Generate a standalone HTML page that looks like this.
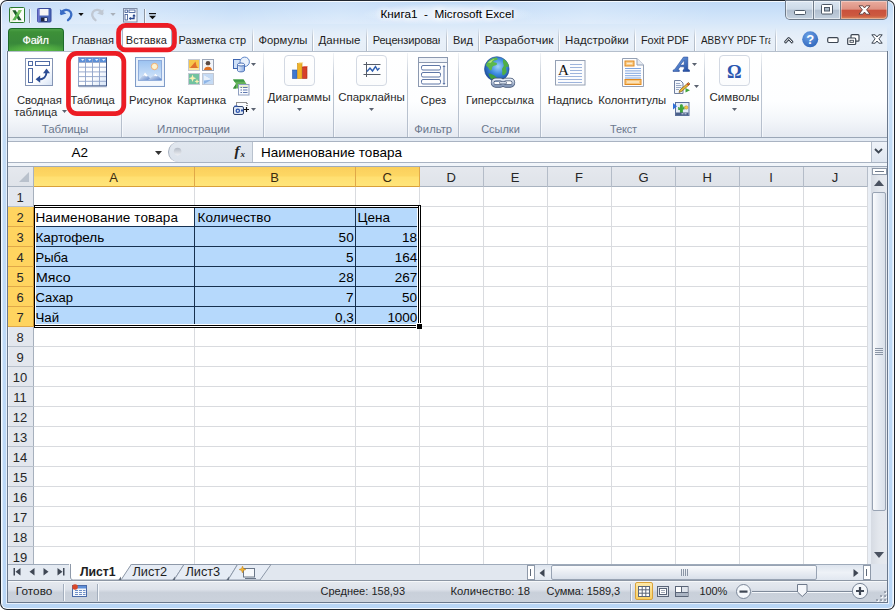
<!DOCTYPE html>
<html lang="ru"><head><meta charset="utf-8"><title>Книга1 - Microsoft Excel</title>
<style>
html,body{margin:0;padding:0;background:#fff;}
body{width:895px;height:610px;overflow:hidden;font-family:"Liberation Sans",sans-serif;}
#win{position:relative;width:895px;height:610px;overflow:hidden;}
#win div,#win svg,#win span.t{position:absolute;box-sizing:border-box;}
#win svg{overflow:visible;}
span.t{white-space:nowrap;line-height:16px;height:16px;color:#1e1e1e;font-size:12px;}
.cal{font-family:"Liberation Sans",sans-serif;}

</style></head>
<body>
<div id="win">
<div style="left:0px;top:0px;width:895px;height:610px;border-radius:7px;background:#20262e;"></div>
<div style="left:1px;top:1px;width:893px;height:608px;border-radius:6px;background:#f4f9fe;"></div>
<div style="left:2px;top:2px;width:891px;height:606px;border-radius:5px;background:linear-gradient(180deg,#c0daf7 0px,#cde2f9 12px,#dae9fa 24px,#d0e3f8 60px,#c3dcf6 140px,#b9d6f6 606px);"></div>
<div style="left:2px;top:2px;width:891px;height:24px;border-radius:5px 5px 0 0;background:linear-gradient(100deg,rgba(255,255,255,0) 0%,rgba(255,255,255,.25) 12%,rgba(255,255,255,0) 26%,rgba(255,255,255,.18) 38%,rgba(255,255,255,0) 52%,rgba(255,255,255,.2) 66%,rgba(255,255,255,0) 80%);"></div>
<div style="left:2px;top:30px;width:1px;height:574px;background:#dcebfb;"></div>
<div style="left:892px;top:30px;width:1px;height:574px;background:#dcebfb;"></div>
<div style="left:6px;top:51px;width:883px;height:553px;background:#e6f0fc;"></div>
<div style="left:7px;top:51px;width:881px;height:552px;background:#6a788c;"></div>
<div style="left:8px;top:51px;width:879px;height:551px;background:#dfe8f3;"></div>
<div style="left:8px;top:24px;width:879px;height:27px;background:linear-gradient(180deg,#d8e8f9 0px,#e2edf9 8px,#e8f0f9 16px,#e6eef7 27px);"></div>
<svg style="left:9px;top:7px" width="16" height="16" viewBox="0 0 16 16"><rect x="0.500" y="0.500" width="15" height="15" rx="1" fill="#fbfdf8" stroke="#2a7a30"/>
<path d="M1 4l3-3h-3z" fill="#cfe6b8"/><rect x="1.200" y="4" width="3" height="11" fill="#e4f1d2" opacity=".700"/>
<path d="M3.300 3.200h3.300l6 10h-3.300z" fill="#1d5f2a"/><path d="M9.600 3.200h3.200l-6.200 10H3.300z" fill="#58b450"/><path d="M9.600 3.200h3.200l-2.600 4.200-1.600-1.500z" fill="#86cc6a"/></svg>
<div style="left:29px;top:9px;width:1px;height:14px;background:#8d96a3;"></div>
<div style="left:30px;top:9px;width:1px;height:14px;background:#f2f6fb;"></div>
<svg style="left:37px;top:8px" width="15" height="15" viewBox="0 0 15 15"><rect x="0.5" y="0.5" width="13.5" height="13.5" rx="1" fill="#4a66b8" stroke="#35489a"/><rect x="2.5" y="1" width="9" height="6.5" fill="#f6f6f6"/><rect x="4" y="9.5" width="6.5" height="4" fill="#1d2440"/><rect x="7.5" y="10" width="2.5" height="3" fill="#e8ecf4"/><rect x="0.5" y="0.5" width="2" height="13.5" fill="#7d7bd6" opacity=".7"/></svg>
<svg style="left:59px;top:7px" width="15" height="15" viewBox="0 0 15 15"><path d="M2 6.5C4 2.2 9.5 1.6 11.6 5c1.7 3-0.2 6.2-2.6 8.2" fill="none" stroke="#3a6cc4" stroke-width="2.300" stroke-linecap="round"/><path d="M0.8 2.2l1 6 5.6-1.6z" fill="#3a6cc4"/></svg>
<svg style="left:78px;top:13px" width="6" height="3" viewBox="0 0 6 3"><path d="M0.300 0h5.400l-2.700 3z" fill="#111"/></svg>
<svg style="left:90px;top:7px" width="15" height="15" viewBox="0 0 15 15"><path d="M12.5 6.5C10.5 2.2 5 1.6 2.9 5c-1.7 3 0.2 6.2 2.6 8.2" fill="none" stroke="#c0c8d3" stroke-width="2.300" stroke-linecap="round"/><path d="M13.7 2.2l-1 6-5.6-1.6z" fill="#c0c8d3"/></svg>
<svg style="left:110px;top:13px" width="6" height="3" viewBox="0 0 6 3"><path d="M0.300 0h5.400l-2.700 3z" fill="#a9b0ba"/></svg>
<svg style="left:123px;top:8px" width="15" height="15" viewBox="0 0 15 15"><rect x="0.5" y="0.5" width="13.5" height="13.5" fill="#f6f9fd" stroke="#7f8da6"/><rect x="2" y="2" width="2.5" height="2.5" fill="#fff" stroke="#34518f" stroke-width=".8"/><rect x="6" y="2" width="6" height="2.5" fill="#fff" stroke="#34518f" stroke-width=".8"/><rect x="2" y="6.5" width="2.5" height="5.5" fill="#fff" stroke="#34518f" stroke-width=".8"/><path d="M6.5 10.5h4.5v-3" fill="none" stroke="#27448a" stroke-width="1.3"/><path d="M9.3 8.2l1.7-2.2 1.7 2.2z" fill="#27448a"/><path d="M8 9l-2.2 1.5 2.2 1.5z" fill="#27448a"/></svg>
<div style="left:144px;top:9px;width:1px;height:14px;background:#8d96a3;"></div>
<div style="left:145px;top:9px;width:1px;height:14px;background:#f2f6fb;"></div>
<svg style="left:149px;top:12.5px" width="7" height="7" viewBox="0 0 7 7"><rect x="0" y="0" width="7" height="1.200" fill="#111"/><path d="M0 2.700h7l-3.500 3.500z" fill="#111"/></svg>
<div style="left:362px;top:3px;width:172px;height:22px;background:radial-gradient(ellipse 50% 50% at 50% 50%,rgba(255,255,255,.6) 0%,rgba(255,255,255,.45) 50%,rgba(255,255,255,0) 100%);"></div>
<span class="t" id="t1" style="left:380.50px;top:6.00px;font-size:11.75px;color:#000;text-shadow:0 0 6px #fff,0 0 8px #fff,0 0 10px #fff;">Книга1&nbsp; -&nbsp; Microsoft Excel</span>
<div style="left:785px;top:0px;width:103px;height:20px;border-radius:0 0 5px 5px;background:#6f7b8a;"></div>
<div style="left:786px;top:1px;width:27px;height:18px;border-radius:0 0 0 4px;background:linear-gradient(180deg,#dbe6f2 0%,#cddae8 45%,#b2bfcf 52%,#c3d0de 100%);box-shadow:inset 0 0 0 1px rgba(255,255,255,.55);"></div>
<div style="left:814px;top:1px;width:26px;height:18px;background:linear-gradient(180deg,#dbe6f2 0%,#cddae8 45%,#b2bfcf 52%,#c3d0de 100%);box-shadow:inset 0 0 0 1px rgba(255,255,255,.55);"></div>
<div style="left:841px;top:1px;width:46px;height:18px;border-radius:0 0 4px 0;background:linear-gradient(180deg,#e9ac9e 0%,#de9283 45%,#c9513c 52%,#cc5a40 82%,#dc8a5c 100%);box-shadow:inset 0 0 0 1px rgba(255,255,255,.35);"></div>
<svg style="left:794px;top:10px" width="12" height="5" viewBox="0 0 12 5"><rect x="0.500" y="0.500" width="11" height="4" rx="1" fill="#fff" stroke="#4d5866"/></svg>
<svg style="left:821px;top:4px" width="12" height="11" viewBox="0 0 12 11"><rect x="0.500" y="0.500" width="11" height="9.500" rx="1" fill="#fff" stroke="#4d5866"/><rect x="3.500" y="3.500" width="5" height="3.500" fill="#aab7c6" stroke="#4d5866"/></svg>
<svg style="left:858px;top:5px" width="13" height="10" viewBox="0 0 13 10"><path d="M1 0.800h3.800l1.700 2.200 1.700-2.200H12L8.600 4.800 12 9.200H8.200L6.500 7 4.800 9.200H1l3.400-4.400z" fill="#fff" stroke="#5a3a38" stroke-width=".900" stroke-linejoin="round"/></svg>
<div style="left:8px;top:28px;width:56px;height:23px;border-radius:4px 4px 0 0;background:#1e6b2a;"></div>
<div style="left:9px;top:29px;width:54px;height:22px;border-radius:3px 3px 0 0;background:radial-gradient(ellipse 30px 9px at 50% 100%,#62c048 0%,rgba(98,192,72,0) 100%),linear-gradient(180deg,#4da247 0px,#3d9038 3px,#39893a 14px,#49a53f 22px);"></div>
<span class="t" id="t2" style="left:22.50px;top:32.00px;font-size:11.00px;letter-spacing:-0.237px;color:#fff;text-shadow:0 0 1px rgba(255,255,255,.6);">Файл</span>
<span class="t" id="t3" style="left:71.90px;top:32.00px;font-size:11.00px;letter-spacing:0.018px;">Главная</span>
<span class="t" id="t4" style="left:125.80px;top:32.00px;font-size:11.00px;letter-spacing:0.044px;">Вставка</span>
<span class="t" id="t5" style="left:178.50px;top:32.00px;font-size:11.00px;letter-spacing:0.029px;">Разметка стр</span>
<span class="t" id="t6" style="left:258.50px;top:32.00px;font-size:11.25px;letter-spacing:-0.010px;">Формулы</span>
<span class="t" id="t7" style="left:318.50px;top:32.00px;font-size:11.50px;letter-spacing:0.073px;">Данные</span>
<span class="t" id="t8" style="left:372.70px;top:32.00px;font-size:11.00px;letter-spacing:-0.147px;overflow:hidden;width:67.30px;">Рецензирование</span>
<span class="t" id="t9" style="left:453.00px;top:32.00px;font-size:11.00px;">Вид</span>
<span class="t" id="t10" style="left:484.70px;top:32.00px;font-size:11.75px;letter-spacing:0.024px;">Разработчик</span>
<span class="t" id="t11" style="left:565.10px;top:32.00px;font-size:11.50px;letter-spacing:0.049px;">Надстройки</span>
<span class="t" id="t12" style="left:640.90px;top:32.00px;font-size:11.00px;letter-spacing:-0.123px;">Foxit PDF</span>
<span class="t" id="t13" style="left:700.50px;top:32.00px;font-size:11.00px;transform:scaleX(0.901);transform-origin:left 50%;overflow:hidden;width:77.14px;">ABBYY PDF Transformer</span>
<div style="left:252px;top:28px;width:1px;height:23px;background:linear-gradient(180deg,rgba(160,170,185,0),#bcc5d0 40%,#b0bac7);"></div>
<div style="left:253px;top:28px;width:1px;height:23px;background:linear-gradient(180deg,rgba(255,255,255,0),#fff 40%);"></div>
<div style="left:312px;top:28px;width:1px;height:23px;background:linear-gradient(180deg,rgba(160,170,185,0),#bcc5d0 40%,#b0bac7);"></div>
<div style="left:313px;top:28px;width:1px;height:23px;background:linear-gradient(180deg,rgba(255,255,255,0),#fff 40%);"></div>
<div style="left:366px;top:28px;width:1px;height:23px;background:linear-gradient(180deg,rgba(160,170,185,0),#bcc5d0 40%,#b0bac7);"></div>
<div style="left:367px;top:28px;width:1px;height:23px;background:linear-gradient(180deg,rgba(255,255,255,0),#fff 40%);"></div>
<div style="left:446px;top:28px;width:1px;height:23px;background:linear-gradient(180deg,rgba(160,170,185,0),#bcc5d0 40%,#b0bac7);"></div>
<div style="left:447px;top:28px;width:1px;height:23px;background:linear-gradient(180deg,rgba(255,255,255,0),#fff 40%);"></div>
<div style="left:478px;top:28px;width:1px;height:23px;background:linear-gradient(180deg,rgba(160,170,185,0),#bcc5d0 40%,#b0bac7);"></div>
<div style="left:479px;top:28px;width:1px;height:23px;background:linear-gradient(180deg,rgba(255,255,255,0),#fff 40%);"></div>
<div style="left:558px;top:28px;width:1px;height:23px;background:linear-gradient(180deg,rgba(160,170,185,0),#bcc5d0 40%,#b0bac7);"></div>
<div style="left:559px;top:28px;width:1px;height:23px;background:linear-gradient(180deg,rgba(255,255,255,0),#fff 40%);"></div>
<div style="left:634px;top:28px;width:1px;height:23px;background:linear-gradient(180deg,rgba(160,170,185,0),#bcc5d0 40%,#b0bac7);"></div>
<div style="left:635px;top:28px;width:1px;height:23px;background:linear-gradient(180deg,rgba(255,255,255,0),#fff 40%);"></div>
<div style="left:694px;top:28px;width:1px;height:23px;background:linear-gradient(180deg,rgba(160,170,185,0),#bcc5d0 40%,#b0bac7);"></div>
<div style="left:695px;top:28px;width:1px;height:23px;background:linear-gradient(180deg,rgba(255,255,255,0),#fff 40%);"></div>
<div style="left:775px;top:28px;width:1px;height:23px;background:linear-gradient(180deg,rgba(160,170,185,0),#bcc5d0 40%,#b0bac7);"></div>
<div style="left:776px;top:28px;width:1px;height:23px;background:linear-gradient(180deg,rgba(255,255,255,0),#fff 40%);"></div>
<div style="left:122px;top:27px;width:50px;height:25px;border-radius:3px 3px 0 0;background:#fff;border:1px solid #a9b4c3;border-bottom:none;"></div>
<span class="t" id="t14" style="left:125.80px;top:32.00px;font-size:11.00px;letter-spacing:0.044px;">Вставка</span>
<svg style="left:784px;top:36px" width="10" height="8" viewBox="0 0 10 8"><path d="M1.500 6L4.700 2.500 8 6" fill="none" stroke="#3d4652" stroke-width="2.800" stroke-linejoin="round" stroke-linecap="round"/><path d="M1.500 6L4.700 2.500 8 6" fill="none" stroke="#fff" stroke-width="1" stroke-linejoin="round" stroke-linecap="round"/></svg>
<svg style="left:802px;top:31px" width="17" height="17" viewBox="0 0 17 17"><defs><radialGradient id="hg" cx=".4" cy=".3" r=".8"><stop offset="0" stop-color="#6aa0e6"/><stop offset="1" stop-color="#2c62b8"/></radialGradient></defs><circle cx="8.2" cy="8.3" r="8" fill="url(#hg)"/><text x="8.2" y="13" text-anchor="middle" font-family="Liberation Sans,sans-serif" font-weight="700" font-size="13" fill="#fff">?</text></svg>
<svg style="left:827px;top:37px" width="12" height="7" viewBox="0 0 12 7"><rect x="0.7" y="0.7" width="10.4" height="4.8" rx="1.2" fill="#fff" stroke="#3d4652" stroke-width="1.2"/></svg>
<svg style="left:847px;top:34px" width="13" height="12" viewBox="0 0 13 12"><rect x="4" y="0.7" width="8" height="6.5" rx="1" fill="#fff" stroke="#3d4652" stroke-width="1.2"/><rect x="0.7" y="4" width="8" height="6.5" rx="1" fill="#fff" stroke="#3d4652" stroke-width="1.2"/><rect x="3" y="6.3" width="3.4" height="2" fill="#fff" stroke="#3d4652" stroke-width=".9"/></svg>
<svg style="left:871px;top:34px" width="12" height="10" viewBox="0 0 12 10"><path d="M0.800 0.800h3.400l1.800 2.200 1.800-2.200h3.400L7.900 4.800l3.300 4.400H7.800L6 7 4.200 9.200H0.800l3.300-4.400z" fill="#fff" stroke="#3d4652" stroke-width="1" stroke-linejoin="round"/></svg>
<div style="left:8px;top:51px;width:879px;height:87px;background:linear-gradient(180deg,#ffffff 0px,#fdfeff 50px,#f3f6fa 68px,#e9edf4 80px,#e4e9f1 86px);border-top:1px solid #b5bfcc;border-bottom:1px solid #9ba7b7;"></div>
<div style="left:123px;top:51px;width:48px;height:1px;background:#fff;"></div>
<div style="left:8px;top:138px;width:879px;height:3px;background:#e4ebf4;"></div>
<div style="left:121px;top:53px;width:1px;height:84px;background:linear-gradient(180deg,rgba(190,199,212,.2),#bfc8d4 30%,#b4bdcb 100%);"></div>
<div style="left:122px;top:53px;width:1px;height:84px;background:linear-gradient(180deg,rgba(255,255,255,.2),#fff 30%,#f4f7fb 100%);"></div>
<div style="left:263px;top:53px;width:1px;height:84px;background:linear-gradient(180deg,rgba(190,199,212,.2),#bfc8d4 30%,#b4bdcb 100%);"></div>
<div style="left:264px;top:53px;width:1px;height:84px;background:linear-gradient(180deg,rgba(255,255,255,.2),#fff 30%,#f4f7fb 100%);"></div>
<div style="left:333px;top:53px;width:1px;height:84px;background:linear-gradient(180deg,rgba(190,199,212,.2),#bfc8d4 30%,#b4bdcb 100%);"></div>
<div style="left:334px;top:53px;width:1px;height:84px;background:linear-gradient(180deg,rgba(255,255,255,.2),#fff 30%,#f4f7fb 100%);"></div>
<div style="left:407px;top:53px;width:1px;height:84px;background:linear-gradient(180deg,rgba(190,199,212,.2),#bfc8d4 30%,#b4bdcb 100%);"></div>
<div style="left:408px;top:53px;width:1px;height:84px;background:linear-gradient(180deg,rgba(255,255,255,.2),#fff 30%,#f4f7fb 100%);"></div>
<div style="left:458px;top:53px;width:1px;height:84px;background:linear-gradient(180deg,rgba(190,199,212,.2),#bfc8d4 30%,#b4bdcb 100%);"></div>
<div style="left:459px;top:53px;width:1px;height:84px;background:linear-gradient(180deg,rgba(255,255,255,.2),#fff 30%,#f4f7fb 100%);"></div>
<div style="left:540px;top:53px;width:1px;height:84px;background:linear-gradient(180deg,rgba(190,199,212,.2),#bfc8d4 30%,#b4bdcb 100%);"></div>
<div style="left:541px;top:53px;width:1px;height:84px;background:linear-gradient(180deg,rgba(255,255,255,.2),#fff 30%,#f4f7fb 100%);"></div>
<div style="left:704px;top:53px;width:1px;height:84px;background:linear-gradient(180deg,rgba(190,199,212,.2),#bfc8d4 30%,#b4bdcb 100%);"></div>
<div style="left:705px;top:53px;width:1px;height:84px;background:linear-gradient(180deg,rgba(255,255,255,.2),#fff 30%,#f4f7fb 100%);"></div>
<div style="left:761px;top:53px;width:1px;height:84px;background:linear-gradient(180deg,rgba(190,199,212,.2),#bfc8d4 30%,#b4bdcb 100%);"></div>
<div style="left:762px;top:53px;width:1px;height:84px;background:linear-gradient(180deg,rgba(255,255,255,.2),#fff 30%,#f4f7fb 100%);"></div>
<svg style="left:23px;top:56px" width="32" height="32" viewBox="0 0 32 32"><defs><linearGradient id="pv" x1="0" y1="0" x2="1" y2="1"><stop offset="0" stop-color="#fff"/><stop offset=".600" stop-color="#fff"/><stop offset="1" stop-color="#d5e2f5"/></linearGradient></defs>
<rect x="2.500" y="2.500" width="27" height="27" fill="url(#pv)" stroke="#8595b5"/>
<rect x="5.5" y="5.5" width="4" height="4" fill="#fff" stroke="#4f6aa3"/><rect x="12.5" y="5.5" width="14" height="4" fill="#fff" stroke="#4f6aa3"/><rect x="5.5" y="12.5" width="4" height="14" fill="#fff" stroke="#4f6aa3"/>
<path d="M15.5 23.5c5 0 8-3 8-7.5" fill="none" stroke="#2a4b93" stroke-width="2"/><path d="M20 17.2l3.5-4.6 3.5 4.6z" fill="#2a4b93"/><path d="M17.2 19.5l-4.6 3.7 4.6 3.6z" fill="#2a4b93"/></svg>
<span class="t" id="t15" style="left:16.90px;top:92.00px;font-size:11.25px;letter-spacing:-0.046px;color:#2a2a2a;">Сводная</span>
<span class="t" id="t16" style="left:14.20px;top:104.00px;font-size:11.25px;letter-spacing:0.060px;color:#2a2a2a;">таблица</span>
<svg style="left:61.5px;top:110px" width="5" height="3" viewBox="0 0 5 3"><path d="M0 0h5l-2.5 3z" fill="#5a6270"/></svg>
<svg style="left:77px;top:57px" width="31" height="31" viewBox="0 0 31 31"><defs><linearGradient id="tb" x1="0" y1="0" x2="1" y2="1"><stop offset="0" stop-color="#fff"/><stop offset=".600" stop-color="#fff"/><stop offset="1" stop-color="#d3e2f6"/></linearGradient></defs>
<rect x="1.500" y="0.500" width="28" height="28.500" fill="url(#tb)" stroke="#8fa3c8"/>
<rect x="2" y="1" width="27" height="4" fill="#5b8fd8"/>
<path d="M4 2h3.400l-1.700 2zM11 2h3.400l-1.700 2zM18 2h3.400l-1.700 2zM25 2h3.400l-1.700 2z" fill="#eaf2fd"/>
<path d="M1.500 5.500h28M1.500 10.200h28M1.500 14.900h28M1.500 19.600h28M1.500 24.300h28M8.500 1v28M15.500 1v28M22.500 1v28" stroke="#8fa3c8" stroke-width=".900" fill="none"/>
<path d="M29.500 0.500v28.500h-28" stroke="#3f5583" stroke-width="1" fill="none"/>
<rect x="2" y="29.500" width="28" height="1.200" fill="#c9d2e0" opacity=".600"/></svg>
<span class="t" id="t17" style="left:70.50px;top:92.00px;font-size:11.25px;letter-spacing:0.011px;color:#2a2a2a;">Таблица</span>
<span class="t" id="t18" style="left:41.70px;top:121.00px;font-size:11.50px;letter-spacing:-0.053px;color:#6b788e;">Таблицы</span>
<svg style="left:135px;top:57px" width="31" height="31" viewBox="0 0 31 31"><defs><linearGradient id="sky" x1="0" y1="0" x2="0" y2="1"><stop offset="0" stop-color="#9cc3f1"/><stop offset="1" stop-color="#d6e7fa"/></linearGradient><linearGradient id="mt" x1="0" y1="0" x2="1" y2="1"><stop offset="0" stop-color="#ffffff"/><stop offset="1" stop-color="#5d86cb"/></linearGradient></defs>
<rect x="0.500" y="0.500" width="29" height="29" fill="#e8f0fb" stroke="#7f9cc8"/><rect x="1.500" y="24" width="27" height="4.500" fill="#f4f8fd"/>
<rect x="3.500" y="3.500" width="23" height="20" fill="url(#sky)" stroke="#7fa0d4" stroke-width=".800"/>
<circle cx="19.500" cy="9.500" r="3.200" fill="#fdf3d0" stroke="#f0a868" stroke-width=".900"/>
<path d="M4 23l6-7.500 6.500 7.500z" fill="url(#mt)"/><path d="M13 23l7.300-6.300 6.200 5.300v1z" fill="url(#mt)"/><path d="M10 15.500l3 3.500-2 .500-1.500-1.200-1.500 1z" fill="#fff"/><path d="M20.300 16.700l2.500 2.200-1.800.300-1-.800-1.500.800z" fill="#fff"/></svg>
<span class="t" id="t19" style="left:129.00px;top:92.00px;font-size:11.25px;letter-spacing:0.023px;color:#2a2a2a;">Рисунок</span>
<svg style="left:188px;top:59px" width="27" height="27" viewBox="0 0 27 27"><rect x="0.500" y="0.500" width="11" height="11" fill="#f7c64a" stroke="#c3c9d4"/><path d="M1.500 9.500l6-7 1 4.500 2 2.500z" fill="#e0702c"/><rect x="1" y="9" width="10" height="2" fill="#fbe29a"/>
<rect x="14.500" y="0.500" width="11" height="11" fill="#f2f4f8" stroke="#9aa5b8"/><circle cx="20" cy="4.200" r="2.300" fill="#5a4a44"/><path d="M16 11c0-4.500 8-4.500 8 0z" fill="#dd6f22"/><path d="M18.500 6.500h3l-1.500 2z" fill="#f3d9c0"/>
<rect x="0.500" y="14.500" width="11" height="11" fill="#72c2a0" stroke="#c3c9d4"/><path d="M4.500 15.500l1 2.800 2.800 1-2.800 1-1 2.800-1-2.800-2.800-1 2.800-1zM9 20l.700 1.800 1.800.700-1.800.700L9 25l-.700-1.800-1.800-.700 1.800-.700z" fill="#faf3b4"/>
<rect x="14.500" y="14.500" width="11" height="11" fill="#c4daf4" stroke="#c3c9d4"/><path d="M16 16l8 4.500-8 4.500z" fill="#8db4e6"/><path d="M16 16l8 4.500-8 1z" fill="#e8f1fb"/></svg>
<span class="t" id="t20" style="left:177.00px;top:92.00px;font-size:11.50px;letter-spacing:0.016px;color:#2a2a2a;">Картинка</span>
<svg style="left:233px;top:57px" width="18" height="16" viewBox="0 0 18 16"><defs><linearGradient id="cy" x1="0" y1="0" x2="1" y2="0"><stop offset="0" stop-color="#eef4fd"/><stop offset="1" stop-color="#86a9e2"/></linearGradient></defs>
<rect x="0.500" y="2.500" width="8" height="9" fill="#cfe0f7" stroke="#3f66b0"/><circle cx="11.700" cy="4.800" r="4.700" fill="#e9f1fc" stroke="#5f86c8"/>
<path d="M4.500 7.500v6c0 1.800 7 1.800 7 0v-6" fill="url(#cy)" stroke="#3f66b0" stroke-width=".900"/><ellipse cx="8" cy="7.500" rx="3.500" ry="1.500" fill="#f2f7fe" stroke="#3f66b0" stroke-width=".900"/></svg>
<svg style="left:251px;top:63px" width="5" height="3" viewBox="0 0 5 3"><path d="M0 0h5l-2.5 3z" fill="#5a6270"/></svg>
<svg style="left:232px;top:79px" width="18" height="17" viewBox="0 0 18 17"><path d="M1 0.500h10.500l3 4.500-3 4.500H1l3-4.500z" fill="#63b25a"/><path d="M1 0.500h10.500l1.500 2.200H2.500z" fill="#3f9a48"/><path d="M1 9.500l3-4.500v4.500z" fill="#3a8a40"/>
<rect x="6.500" y="5.500" width="10.500" height="10.500" fill="#f8fafd" stroke="#8f9fc0"/><rect x="7.500" y="6.500" width="8.500" height="2.500" fill="#e3f0c8"/><path d="M8.500 8.500h1.500M11 8.500h4.500M8.500 11h1.500M11 11h4.500M8.500 13.500h1.500M11 13.500h4.500" stroke="#5f79b0" stroke-width="1"/></svg>
<svg style="left:233px;top:101px" width="18" height="15" viewBox="0 0 18 15"><path d="M3.500 4.500v-3h10.500v4" fill="none" stroke="#222" stroke-dasharray="1 1"/><rect x="0.500" y="5.500" width="10" height="8" rx="1.500" fill="#dfe8f4" stroke="#2f4470"/><rect x="1.500" y="4.500" width="3" height="1.500" fill="#2f56b0"/><circle cx="4.800" cy="9.700" r="2.300" fill="#2f56b0"/><circle cx="4.800" cy="9.700" r="1" fill="#dfe8f4"/><rect x="8" y="8.500" width="2" height="2" fill="#2f56b0"/><path d="M11 8.500h5M13.500 6v5" stroke="#111" stroke-width="1.200"/></svg>
<svg style="left:251px;top:107.5px" width="5" height="3" viewBox="0 0 5 3"><path d="M0 0h5l-2.5 3z" fill="#5a6270"/></svg>
<span class="t" id="t21" style="left:157.00px;top:121.00px;font-size:11.50px;letter-spacing:-0.051px;color:#6b788e;">Иллюстрации</span>
<div style="left:284px;top:55px;width:31px;height:31px;border-radius:4px;border:1px solid #d3d9e3;background:linear-gradient(180deg,#ffffff,#fbfcfd);"></div>
<svg style="left:292px;top:62px" width="16" height="17" viewBox="0 0 16 17"><rect x="0.500" y="8" width="4.500" height="8.500" fill="#3f78d0" stroke="#2a57a8" stroke-width=".6"/><rect x="5.500" y="1.500" width="4.500" height="15" fill="#f0b428" stroke="#c98a10" stroke-width=".6"/><rect x="10.500" y="5" width="4.500" height="11.500" fill="#d8402a" stroke="#a82a18" stroke-width=".6"/><path d="M5.500 1.500l1.500-1h4.500l-1.500 1z" fill="#f8d060"/><path d="M10.500 5l1.500-1h4l-1 1z" fill="#ea7060"/></svg>
<span class="t" id="t22" style="left:267.50px;top:89.00px;font-size:11.75px;letter-spacing:0.009px;color:#2a2a2a;">Диаграммы</span>
<svg style="left:297px;top:108px" width="5" height="3" viewBox="0 0 5 3"><path d="M0 0h5l-2.5 3z" fill="#5a6270"/></svg>
<div style="left:356px;top:55px;width:31px;height:31px;border-radius:4px;border:1px solid #d3d9e3;background:linear-gradient(180deg,#ffffff,#fbfcfd);"></div>
<svg style="left:363px;top:62px" width="18" height="17" viewBox="0 0 18 17"><path d="M3.500 0v15M0.500 2.500h17M0.500 12.500h17" stroke="#555c68" stroke-width="1" fill="none"/><path d="M4 9.500l3-3.500 2.500 3 3-4.500 2 3.500 2-2" fill="none" stroke="#2f5fb0" stroke-width="1.400"/></svg>
<span class="t" id="t23" style="left:338.20px;top:89.00px;font-size:11.50px;color:#2a2a2a;">Спарклайны</span>
<svg style="left:369px;top:108px" width="5" height="3" viewBox="0 0 5 3"><path d="M0 0h5l-2.5 3z" fill="#5a6270"/></svg>
<svg style="left:418px;top:57px" width="31" height="31" viewBox="0 0 31 31"><rect x="0.500" y="0.500" width="29" height="29" fill="#fbfcfe" stroke="#8c99b0"/><rect x="1" y="1" width="28" height="4" fill="#eef2f8"/><path d="M0.500 5.500h29" stroke="#8c99b0"/>
<rect x="3.500" y="8.500" width="19" height="4.500" rx="1.500" fill="#fff" stroke="#5f77a6"/><rect x="3.500" y="15.500" width="19" height="4.500" rx="1.500" fill="#fff" stroke="#5f77a6"/><rect x="3.500" y="22.500" width="19" height="4.500" rx="1.500" fill="#fff" stroke="#5f77a6"/>
<path d="M26 9v18" stroke="#5f77a6"/><path d="M24.500 10l1.500-2 1.500 2zM24.500 26l1.500 2 1.500-2z" fill="#5f77a6"/></svg>
<span class="t" id="t24" style="left:420.50px;top:92.00px;font-size:11.25px;letter-spacing:0.009px;color:#2a2a2a;">Срез</span>
<span class="t" id="t25" style="left:414.30px;top:121.00px;font-size:11.25px;color:#6b788e;">Фильтр</span>
<svg style="left:483px;top:56px" width="32" height="32" viewBox="0 0 32 32"><defs><radialGradient id="gl" cx=".550" cy=".400" r=".700"><stop offset="0" stop-color="#9fd2fa"/><stop offset=".450" stop-color="#3d8be0"/><stop offset="1" stop-color="#123c8a"/></radialGradient><linearGradient id="ch" x1="0" y1="0" x2="0" y2="1"><stop offset="0" stop-color="#e6edf7"/><stop offset="1" stop-color="#7f93b4"/></linearGradient></defs>
<circle cx="13.800" cy="13" r="12.300" fill="url(#gl)" stroke="#1f4a8f" stroke-width=".600"/>
<path d="M3.500 7.500c2-3 5.500-5.500 9-6 2 .300 3 1.200 1.500 2.300-1.500.700-3 .400-3.800 1.700 1.200 1.400 3.500.500 4 2.500-.800 1.800-3 1.300-4.500 2.500-1.200 1.300-.300 3-1.700 4-1.800-.300-2-2.500-3.500-3.700-1.300-.800-2-1.500-1-3.300z" fill="#5cb84c"/><path d="M5 7c1.500-2 4-3.500 6.500-4-.500 1-2.500 1.500-3 3-.500 1.300-2 .500-3.500 1z" fill="#b8e07a"/>
<path d="M20.500 3c2.500 1.200 4.500 3.800 5.300 7-.700 1.500-1.800.200-2.700 1.200-.700 1.800 1.200 3.300.300 5.300-1 1.500-2.300 2.800-3.700 2.700-1.300-1.800.300-3.800-.700-5.500-.200-2 1.800-2.700 1.800-4.500-.300-1.700-1.700-3.500-.300-6.200z" fill="#4fae46"/>
<path d="M5.500 17.500c2-.500 3.500 1 5.500 1.700 1.500 1.300 2.500 2 4 3.300-1 1.500-2.500 2.300-4 2.300-3-1.200-5-4-5.500-7.300z" fill="#3f9f3c"/>
<rect x="9.500" y="23.500" width="11" height="6.500" rx="3.200" fill="none" stroke="#3f5070" stroke-width="3.400"/><rect x="19.500" y="23.500" width="11" height="6.500" rx="3.200" fill="none" stroke="#3f5070" stroke-width="3.400"/>
<rect x="9.500" y="23.500" width="11" height="6.500" rx="3.200" fill="none" stroke="url(#ch)" stroke-width="2.200"/><rect x="19.500" y="23.500" width="11" height="6.500" rx="3.200" fill="none" stroke="url(#ch)" stroke-width="2.200"/>
<rect x="16.500" y="25.600" width="7" height="2.300" rx="1" fill="#dfe7f3" stroke="#3f5070" stroke-width=".700"/></svg>
<span class="t" id="t26" style="left:466.00px;top:92.00px;font-size:11.25px;letter-spacing:0.028px;color:#2a2a2a;">Гиперссылка</span>
<span class="t" id="t27" style="left:481.20px;top:121.00px;font-size:11.00px;letter-spacing:-0.022px;color:#6b788e;">Ссылки</span>
<svg style="left:555px;top:60px" width="31" height="26" viewBox="0 0 31 26"><rect x="0.500" y="0.500" width="29.500" height="24.500" fill="#fbfcfe" stroke="#94a0b4"/><text x="3" y="14.500" font-family="Liberation Serif,serif" font-size="15" fill="#111">A</text>
<path d="M15 4.500h12M15 7.500h12M15 10.500h12M15 13.500h12M3 16.500h24M3 19.500h24M3 22.500h24" stroke="#9db4dc" stroke-width="1"/></svg>
<span class="t" id="t28" style="left:547.80px;top:92.00px;font-size:11.25px;letter-spacing:0.041px;color:#2a2a2a;">Надпись</span>
<svg style="left:622px;top:58px" width="23" height="30" viewBox="0 0 23 30"><path d="M0.500 0.500h14.500l6.500 6.500v21.500h-21z" fill="#fdfdfe" stroke="#94a0b4"/><path d="M15 0.500v6.500h6.500" fill="#e6ebf3" stroke="#94a0b4"/>
<rect x="3" y="3" width="9" height="5" fill="#f8c880" stroke="#e08a20"/><rect x="4.800" y="4.800" width="5.400" height="1.400" fill="#fdebcf"/>
<path d="M3 10.500h16M3 12.900h16M3 15.300h16M3 17.700h16M3 20h16" stroke="#7fa5e0" stroke-width="1"/>
<rect x="3" y="21.500" width="16" height="5" fill="#f8c880" stroke="#e08a20"/><rect x="5" y="23.300" width="12" height="1.400" fill="#fdebcf"/></svg>
<span class="t" id="t29" style="left:598.20px;top:92.00px;font-size:11.25px;letter-spacing:-0.052px;color:#2a2a2a;">Колонтитулы</span>
<svg style="left:673px;top:57px" width="17" height="15" viewBox="0 0 17 15"><defs><linearGradient id="wa" x1="0" y1="0" x2="1" y2="1"><stop offset="0" stop-color="#7fb0f0"/><stop offset="1" stop-color="#1c469c"/></linearGradient></defs>
<path d="M10.500 0h4.300v12.200l1.700.800v1.500h-6.500v-1.500l1.200-.700v-2.500h-4l-2.200 2.600 1.300.600v1.500H0v-1.300l1.800-1zM11.200 3.300l-4 4.700h4z" fill="url(#wa)" stroke="#1c3f8c" stroke-width=".500" stroke-linejoin="round" fill-rule="evenodd"/></svg>
<svg style="left:691.5px;top:63px" width="5" height="3" viewBox="0 0 5 3"><path d="M0 0h5l-2.5 3z" fill="#5a6270"/></svg>
<svg style="left:674px;top:80px" width="17" height="15" viewBox="0 0 17 15"><path d="M0.500 0.500h6l2.500 2.500v10.500h-8.500z" fill="#f4f7fc" stroke="#6f7f9f"/><path d="M2 3.500h4M2 5.500h5.500M2 7.500h5.500M2 9.500h3" stroke="#8f9fc0" stroke-width=".900"/>
<path d="M14.500 2.500l1.500 1.500-8.500 7.500-2.500 1 .800-2.500z" fill="#f0b838" stroke="#7a5a1a" stroke-width=".700"/><path d="M13.300 3.500l1.500 1.500" stroke="#c0392b" stroke-width="1.500"/><path d="M11.500 8l4.500 2.300-4.500 2.300z" fill="#3fa43c"/></svg>
<svg style="left:693.5px;top:85px" width="5" height="3" viewBox="0 0 5 3"><path d="M0 0h5l-2.5 3z" fill="#5a6270"/></svg>
<svg style="left:673px;top:102px" width="17" height="14" viewBox="0 0 17 14"><rect x="2.500" y="0.500" width="13.500" height="13" fill="#e4ecf7" stroke="#5a6f9a"/><path d="M0 1l4 3.300-4 3.300z" fill="#2f6fd8"/>
<path d="M7.500 10.500v-7c0-1 1.800-1 1.800 0v7zM5.800 5v2.500h1.800M11 4.500v2.500h-1.800" fill="#3fa43c" stroke="#3fa43c" stroke-width="1.100"/><circle cx="13.300" cy="5.500" r="1.700" fill="#f6c84a" stroke="#c08a20" stroke-width=".500"/>
<rect x="3" y="10.500" width="12.500" height="2.500" fill="#4a5f8a"/><path d="M8.500 11.800h6" stroke="#e4ecf7" stroke-width=".900" stroke-dasharray="2 1"/></svg>
<span class="t" id="t30" style="left:610.00px;top:121.00px;font-size:11.00px;letter-spacing:-0.141px;color:#6b788e;">Текст</span>
<div style="left:719px;top:55px;width:31px;height:31px;border-radius:4px;border:1px solid #d3d9e3;background:linear-gradient(180deg,#ffffff,#fbfcfd);"></div>
<span class="t" id="t31" style="left:727.00px;top:64.00px;font-size:18.25px;letter-spacing:-0.025px;color:#2a56b0;font-weight:700;font-family:'Liberation Serif',serif;">Ω</span>
<span class="t" id="t32" style="left:709.50px;top:89.00px;font-size:11.50px;letter-spacing:0.024px;color:#2a2a2a;">Символы</span>
<svg style="left:732px;top:108px" width="5" height="3" viewBox="0 0 5 3"><path d="M0 0h5l-2.5 3z" fill="#5a6270"/></svg>
<svg style="left:0px;top:0px" width="895" height="140" viewBox="0 0 895 140"><rect x="118.550" y="25.450" width="55.900" height="24.500" rx="7" fill="none" stroke="#ec1c24" stroke-width="4.700"/><rect x="68.450" y="53.350" width="55.400" height="60.200" rx="8.500" fill="none" stroke="#ec1c24" stroke-width="4.700"/></svg>
<div style="left:8px;top:141px;width:879px;height:26px;background:#e4ebf4;"></div>
<div style="left:8px;top:141px;width:879px;height:1px;background:#a9b3c2;"></div>
<div style="left:8px;top:142px;width:879px;height:20px;background:#fff;"></div>
<div style="left:8px;top:162px;width:879px;height:1px;background:#a9b3c2;"></div>
<div style="left:8px;top:163px;width:879px;height:3px;background:#f1f5fa;"></div>
<div style="left:8px;top:166px;width:879px;height:1px;background:#9eaaba;"></div>
<div style="left:168px;top:142px;width:85px;height:20px;background:linear-gradient(180deg,#e1e7ef,#dce3ec);border-left:1px solid #a3adbc;border-right:1px solid #b9c2ce;border-radius:10px 0 0 10px;"></div>
<svg style="left:173px;top:147px" width="9" height="9" viewBox="0 0 9 9"><defs><linearGradient id="cb" x1="0" y1="0" x2="0" y2="1"><stop offset="0" stop-color="#b4bbc6"/><stop offset="1" stop-color="#eef0f4"/></linearGradient></defs><circle cx="4.600" cy="4.600" r="3.800" fill="url(#cb)"/></svg>
<span class="t" id="t33" style="left:71.50px;top:145.00px;font-size:13.50px;letter-spacing:0.042px;color:#000;">A2</span>
<svg style="left:155px;top:151px" width="7" height="4" viewBox="0 0 7 4"><path d="M0 0h7l-3.500 4z" fill="#333"/></svg>
<span class="t" id="t34" style="left:234.50px;top:143.00px;font-size:15.00px;color:#222;font-weight:700;font-family:'Liberation Serif',serif;font-style:italic;">f</span>
<span class="t" id="t35" style="left:240.50px;top:146.00px;font-size:9.00px;color:#222;font-weight:700;font-family:'Liberation Serif',serif;font-style:italic;">x</span>
<span class="t" id="t36" style="left:261.00px;top:145.00px;font-size:13.50px;letter-spacing:0.036px;color:#000;">Наименование товара</span>
<div style="left:871px;top:142px;width:16px;height:20px;background:linear-gradient(180deg,#eef2f8,#dfe6f0);border-left:1px solid #b4bdca;"></div>
<svg style="left:874px;top:148px" width="9" height="6" viewBox="0 0 9 6"><path d="M1 1l3.500 3.500L8 1" fill="none" stroke="#3d4652" stroke-width="1.800"/></svg>
<div style="left:8px;top:167px;width:879px;height:397px;background:#fff;"></div>
<div style="left:8px;top:167px;width:860px;height:20px;background:linear-gradient(180deg,#e5e8ee,#dfe3e9);border-bottom:1px solid #a9b3c0;"></div>
<div style="left:8px;top:187px;width:26px;height:377px;background:#e3e7ee;border-right:1px solid #a6b0bd;border-left:1px solid #f1f3f6;"></div>
<div style="left:8px;top:167px;width:26px;height:20px;background:linear-gradient(180deg,#e5e8ee,#dfe3e9);border-right:1px solid #a9b3c0;border-bottom:1px solid #a9b3c0;"></div>
<svg style="left:18px;top:171px" width="12" height="12" viewBox="0 0 12 12"><path d="M11 1v10H1z" fill="#b9c1cc"/></svg>
<div style="left:34px;top:167px;width:386px;height:20px;background:linear-gradient(180deg,#fbcf5c 0%,#fdd764 45%,#ffe072 55%,#ffe57a 100%);border-bottom:1px solid #d9a03a;"></div>
<div style="left:8px;top:207px;width:26px;height:120px;background:#ffd45f;border-right:1px solid #c9902f;"></div>
<div style="left:194px;top:167px;width:1px;height:20px;background:#e0a848;"></div>
<span class="t" id="t37" style="left:109.00px;top:170.00px;font-size:13.00px;color:#3a2a10;width:9px;text-align:center;">A</span>
<div style="left:355px;top:167px;width:1px;height:20px;background:#e0a848;"></div>
<span class="t" id="t38" style="left:270.00px;top:170.00px;font-size:13.00px;color:#3a2a10;width:9px;text-align:center;">B</span>
<div style="left:419px;top:167px;width:1px;height:20px;background:#e0a848;"></div>
<span class="t" id="t39" style="left:382.50px;top:170.00px;font-size:13.00px;color:#3a2a10;width:9px;text-align:center;">C</span>
<div style="left:483px;top:167px;width:1px;height:20px;background:#b4bcc8;"></div>
<span class="t" id="t40" style="left:446.50px;top:170.00px;font-size:13.00px;color:#262626;width:9px;text-align:center;">D</span>
<div style="left:547px;top:167px;width:1px;height:20px;background:#b4bcc8;"></div>
<span class="t" id="t41" style="left:510.50px;top:170.00px;font-size:13.00px;color:#262626;width:9px;text-align:center;">E</span>
<div style="left:611px;top:167px;width:1px;height:20px;background:#b4bcc8;"></div>
<span class="t" id="t42" style="left:574.50px;top:170.00px;font-size:13.00px;color:#262626;width:9px;text-align:center;">F</span>
<div style="left:675px;top:167px;width:1px;height:20px;background:#b4bcc8;"></div>
<span class="t" id="t43" style="left:638.50px;top:170.00px;font-size:13.00px;color:#262626;width:9px;text-align:center;">G</span>
<div style="left:739px;top:167px;width:1px;height:20px;background:#b4bcc8;"></div>
<span class="t" id="t44" style="left:702.50px;top:170.00px;font-size:13.00px;color:#262626;width:9px;text-align:center;">H</span>
<div style="left:803px;top:167px;width:1px;height:20px;background:#b4bcc8;"></div>
<span class="t" id="t45" style="left:766.50px;top:170.00px;font-size:13.00px;color:#262626;width:9px;text-align:center;">I</span>
<div style="left:867px;top:167px;width:1px;height:20px;background:#b4bcc8;"></div>
<span class="t" id="t46" style="left:830.50px;top:170.00px;font-size:13.00px;color:#262626;width:9px;text-align:center;">J</span>
<div style="left:8px;top:206px;width:26px;height:1px;background:#b9c1cc;"></div>
<div style="left:34px;top:206px;width:834px;height:1px;background:#d9dbdf;"></div>
<span class="t" id="t47" style="left:16.25px;top:190.00px;font-size:13.00px;color:#262626;width:7.5px;text-align:center;">1</span>
<div style="left:8px;top:226px;width:26px;height:1px;background:#e0a848;"></div>
<div style="left:34px;top:226px;width:834px;height:1px;background:#d9dbdf;"></div>
<span class="t" id="t48" style="left:16.25px;top:210.00px;font-size:13.00px;color:#262626;width:7.5px;text-align:center;">2</span>
<div style="left:8px;top:246px;width:26px;height:1px;background:#e0a848;"></div>
<div style="left:34px;top:246px;width:834px;height:1px;background:#d9dbdf;"></div>
<span class="t" id="t49" style="left:16.25px;top:230.00px;font-size:13.00px;color:#262626;width:7.5px;text-align:center;">3</span>
<div style="left:8px;top:266px;width:26px;height:1px;background:#e0a848;"></div>
<div style="left:34px;top:266px;width:834px;height:1px;background:#d9dbdf;"></div>
<span class="t" id="t50" style="left:16.25px;top:250.00px;font-size:13.00px;color:#262626;width:7.5px;text-align:center;">4</span>
<div style="left:8px;top:286px;width:26px;height:1px;background:#e0a848;"></div>
<div style="left:34px;top:286px;width:834px;height:1px;background:#d9dbdf;"></div>
<span class="t" id="t51" style="left:16.25px;top:270.00px;font-size:13.00px;color:#262626;width:7.5px;text-align:center;">5</span>
<div style="left:8px;top:306px;width:26px;height:1px;background:#e0a848;"></div>
<div style="left:34px;top:306px;width:834px;height:1px;background:#d9dbdf;"></div>
<span class="t" id="t52" style="left:16.25px;top:290.00px;font-size:13.00px;color:#262626;width:7.5px;text-align:center;">6</span>
<div style="left:8px;top:326px;width:26px;height:1px;background:#e0a848;"></div>
<div style="left:34px;top:326px;width:834px;height:1px;background:#d9dbdf;"></div>
<span class="t" id="t53" style="left:16.25px;top:310.00px;font-size:13.00px;color:#262626;width:7.5px;text-align:center;">7</span>
<div style="left:8px;top:346px;width:26px;height:1px;background:#b9c1cc;"></div>
<div style="left:34px;top:346px;width:834px;height:1px;background:#d9dbdf;"></div>
<span class="t" id="t54" style="left:16.25px;top:330.00px;font-size:13.00px;color:#262626;width:7.5px;text-align:center;">8</span>
<div style="left:8px;top:366px;width:26px;height:1px;background:#b9c1cc;"></div>
<div style="left:34px;top:366px;width:834px;height:1px;background:#d9dbdf;"></div>
<span class="t" id="t55" style="left:16.25px;top:350.00px;font-size:13.00px;color:#262626;width:7.5px;text-align:center;">9</span>
<div style="left:8px;top:386px;width:26px;height:1px;background:#b9c1cc;"></div>
<div style="left:34px;top:386px;width:834px;height:1px;background:#d9dbdf;"></div>
<span class="t" id="t56" style="left:12.50px;top:370.00px;font-size:13.00px;color:#262626;width:15px;text-align:center;">10</span>
<div style="left:8px;top:406px;width:26px;height:1px;background:#b9c1cc;"></div>
<div style="left:34px;top:406px;width:834px;height:1px;background:#d9dbdf;"></div>
<span class="t" id="t57" style="left:12.50px;top:390.00px;font-size:13.00px;color:#262626;width:15px;text-align:center;">11</span>
<div style="left:8px;top:426px;width:26px;height:1px;background:#b9c1cc;"></div>
<div style="left:34px;top:426px;width:834px;height:1px;background:#d9dbdf;"></div>
<span class="t" id="t58" style="left:12.50px;top:410.00px;font-size:13.00px;color:#262626;width:15px;text-align:center;">12</span>
<div style="left:8px;top:446px;width:26px;height:1px;background:#b9c1cc;"></div>
<div style="left:34px;top:446px;width:834px;height:1px;background:#d9dbdf;"></div>
<span class="t" id="t59" style="left:12.50px;top:430.00px;font-size:13.00px;color:#262626;width:15px;text-align:center;">13</span>
<div style="left:8px;top:466px;width:26px;height:1px;background:#b9c1cc;"></div>
<div style="left:34px;top:466px;width:834px;height:1px;background:#d9dbdf;"></div>
<span class="t" id="t60" style="left:12.50px;top:450.00px;font-size:13.00px;color:#262626;width:15px;text-align:center;">14</span>
<div style="left:8px;top:486px;width:26px;height:1px;background:#b9c1cc;"></div>
<div style="left:34px;top:486px;width:834px;height:1px;background:#d9dbdf;"></div>
<span class="t" id="t61" style="left:12.50px;top:470.00px;font-size:13.00px;color:#262626;width:15px;text-align:center;">15</span>
<div style="left:8px;top:506px;width:26px;height:1px;background:#b9c1cc;"></div>
<div style="left:34px;top:506px;width:834px;height:1px;background:#d9dbdf;"></div>
<span class="t" id="t62" style="left:12.50px;top:490.00px;font-size:13.00px;color:#262626;width:15px;text-align:center;">16</span>
<div style="left:8px;top:526px;width:26px;height:1px;background:#b9c1cc;"></div>
<div style="left:34px;top:526px;width:834px;height:1px;background:#d9dbdf;"></div>
<span class="t" id="t63" style="left:12.50px;top:510.00px;font-size:13.00px;color:#262626;width:15px;text-align:center;">17</span>
<div style="left:8px;top:546px;width:26px;height:1px;background:#b9c1cc;"></div>
<div style="left:34px;top:546px;width:834px;height:1px;background:#d9dbdf;"></div>
<span class="t" id="t64" style="left:12.50px;top:530.00px;font-size:13.00px;color:#262626;width:15px;text-align:center;">18</span>
<div style="left:8px;top:566px;width:26px;height:1px;background:#b9c1cc;"></div>
<span class="t" id="t65" style="left:12.50px;top:550.00px;font-size:13.00px;color:#262626;width:15px;text-align:center;">19</span>
<div style="left:194px;top:187px;width:1px;height:377px;background:#d9dbdf;"></div>
<div style="left:355px;top:187px;width:1px;height:377px;background:#d9dbdf;"></div>
<div style="left:419px;top:187px;width:1px;height:377px;background:#d9dbdf;"></div>
<div style="left:483px;top:187px;width:1px;height:377px;background:#d9dbdf;"></div>
<div style="left:547px;top:187px;width:1px;height:377px;background:#d9dbdf;"></div>
<div style="left:611px;top:187px;width:1px;height:377px;background:#d9dbdf;"></div>
<div style="left:675px;top:187px;width:1px;height:377px;background:#d9dbdf;"></div>
<div style="left:739px;top:187px;width:1px;height:377px;background:#d9dbdf;"></div>
<div style="left:803px;top:187px;width:1px;height:377px;background:#d9dbdf;"></div>
<div style="left:867px;top:187px;width:1px;height:377px;background:#d9dbdf;"></div>
<div style="left:36px;top:208px;width:381px;height:116px;background:#b6d9fc;"></div>
<div style="left:35px;top:208px;width:159px;height:18px;background:#fff;"></div>
<div style="left:35px;top:226px;width:382px;height:1px;background:#16304f;"></div>
<div style="left:35px;top:246px;width:382px;height:1px;background:#16304f;"></div>
<div style="left:35px;top:266px;width:382px;height:1px;background:#16304f;"></div>
<div style="left:35px;top:286px;width:382px;height:1px;background:#16304f;"></div>
<div style="left:35px;top:306px;width:382px;height:1px;background:#16304f;"></div>
<div style="left:194px;top:208px;width:1px;height:116px;background:#16304f;"></div>
<div style="left:355px;top:208px;width:1px;height:116px;background:#16304f;"></div>
<div style="left:34px;top:205px;width:387px;height:3px;background:#000;"></div>
<div style="left:35px;top:206px;width:385px;height:1px;background:#fff;"></div>
<div style="left:34px;top:325px;width:387px;height:3px;background:#000;"></div>
<div style="left:35px;top:326px;width:385px;height:1px;background:#fff;"></div>
<div style="left:34px;top:205px;width:1px;height:123px;background:#000;"></div>
<div style="left:35px;top:208px;width:1px;height:117px;background:#fff;"></div>
<div style="left:417px;top:208px;width:1px;height:117px;background:#fff;"></div>
<div style="left:36px;top:324px;width:382px;height:1px;background:#fff;"></div>
<div style="left:418px;top:205px;width:3px;height:123px;background:#000;"></div>
<div style="left:419px;top:206px;width:1px;height:121px;background:#fff;"></div>
<div style="left:416px;top:323px;width:6px;height:6px;background:#fff;"></div>
<div style="left:417px;top:324px;width:5px;height:5px;background:#000;"></div>
<span class="t" id="t66" style="left:35.50px;top:210.00px;font-size:13.50px;letter-spacing:0.115px;color:#000;">Наименование товара</span>
<span class="t" id="t67" style="left:197.50px;top:210.00px;font-size:13.50px;letter-spacing:0.110px;color:#000;">Количество</span>
<span class="t" id="t68" style="left:357.50px;top:210.00px;font-size:13.50px;letter-spacing:0.033px;color:#000;">Цена</span>
<span class="t" id="t69" style="left:35.50px;top:230.00px;font-size:13.50px;letter-spacing:-0.067px;color:#000;">Картофель</span>
<span class="t" id="t70" style="right:541.30px;top:230.00px;font-size:13.50px;letter-spacing:0.034px;color:#000;">50</span>
<span class="t" id="t71" style="right:477.80px;top:230.00px;font-size:13.50px;letter-spacing:0.084px;color:#000;">18</span>
<span class="t" id="t72" style="left:35.50px;top:250.00px;font-size:13.00px;letter-spacing:0.048px;color:#000;">Рыба</span>
<span class="t" id="t73" style="right:541.30px;top:250.00px;font-size:13.50px;letter-spacing:0.084px;color:#000;">5</span>
<span class="t" id="t74" style="right:477.80px;top:250.00px;font-size:13.50px;letter-spacing:-0.010px;color:#000;">164</span>
<span class="t" id="t75" style="left:35.50px;top:270.00px;font-size:13.50px;transform:scaleX(1.049);transform-origin:left 50%;color:#000;">Мясо</span>
<span class="t" id="t76" style="right:541.30px;top:270.00px;font-size:13.50px;letter-spacing:0.034px;color:#000;">28</span>
<span class="t" id="t77" style="right:477.80px;top:270.00px;font-size:13.50px;letter-spacing:-0.010px;color:#000;">267</span>
<span class="t" id="t78" style="left:35.50px;top:290.00px;font-size:13.00px;color:#000;">Сахар</span>
<span class="t" id="t79" style="right:541.30px;top:290.00px;font-size:13.50px;letter-spacing:0.084px;color:#000;">7</span>
<span class="t" id="t80" style="right:477.80px;top:290.00px;font-size:13.50px;letter-spacing:0.084px;color:#000;">50</span>
<span class="t" id="t81" style="left:35.50px;top:310.00px;font-size:13.25px;color:#000;">Чай</span>
<span class="t" id="t82" style="right:541.30px;top:310.00px;font-size:13.50px;letter-spacing:-0.060px;color:#000;">0,3</span>
<span class="t" id="t83" style="right:477.80px;top:310.00px;font-size:13.50px;letter-spacing:-0.062px;color:#000;">1000</span>
<div style="left:868px;top:167px;width:19px;height:397px;background:#e9eef5;"></div>
<div style="left:871px;top:167px;width:16px;height:397px;background:linear-gradient(90deg,#d6dbe3,#e3e7ed 50%,#e6e9ef);"></div>
<div style="left:872px;top:168px;width:15px;height:7px;background:#fff;border:1px solid #8e99a9;"></div>
<div style="left:875px;top:171px;width:9px;height:1px;background:#6f7a8a;"></div>
<svg style="left:874px;top:180px" width="10" height="6" viewBox="0 0 10 6"><path d="M5 0l5 6H0z" fill="#4a5260"/></svg>
<div style="left:872px;top:192px;width:14px;height:319px;border:1px solid #98a3b3;border-radius:2px;background:linear-gradient(90deg,#fafbfd,#e6ebf2 50%,#d9e0ea);"></div>
<div style="left:875px;top:348px;width:8px;height:1px;background:#8b96a6;"></div>
<div style="left:875px;top:350px;width:8px;height:1px;background:#8b96a6;"></div>
<div style="left:875px;top:352px;width:8px;height:1px;background:#8b96a6;"></div>
<div style="left:875px;top:354px;width:8px;height:1px;background:#8b96a6;"></div>
<svg style="left:874px;top:552px" width="10" height="6" viewBox="0 0 10 6"><path d="M0 0h10l-5 6z" fill="#4a5260"/></svg>
<div style="left:8px;top:564px;width:879px;height:17px;background:#e1e7ef;"></div>
<div style="left:8px;top:564px;width:863px;height:1px;background:#9eaaba;"></div>
<div style="left:8px;top:565px;width:63px;height:15px;background:#e4eaf2;"></div>
<svg style="left:13px;top:568px" width="8" height="8" viewBox="0 0 8 8"><path d="M0.500 0h1.500v7.500H0.500z M7.500 0v7.500L2.500 3.750z" fill="#3f4754"/></svg>
<svg style="left:29px;top:568px" width="6" height="8" viewBox="0 0 6 8"><path d="M5.500 0v7.500L0.500 3.750z" fill="#3f4754"/></svg>
<svg style="left:43px;top:568px" width="6" height="8" viewBox="0 0 6 8"><path d="M0.500 0v7.500l5-3.750z" fill="#3f4754"/></svg>
<svg style="left:57px;top:568px" width="8" height="8" viewBox="0 0 8 8"><path d="M6 0h1.500v7.500H6z M0.500 0v7.500l5-3.750z" fill="#3f4754"/></svg>
<svg style="left:66px;top:564px" width="220" height="17" viewBox="0 0 220 17"><path d="M65 0.500h53l-10 15.500H54z" fill="#e6ecf5" stroke="#8e99a9"/>
<path d="M118 0.500h53.500l-9.500 15.500H108z" fill="#e6ecf5" stroke="#8e99a9"/>
<path d="M171.500 0.500h33.500l-11 15.500H162z" fill="#e6ecf5" stroke="#8e99a9"/>
<path d="M3 -0.500h63l-11 16.500H8c-2 0-3-1-3-3z" fill="#fff"/><path d="M4.500 0v13c0 2 1 3 3 3H55l10.500-16" fill="none" stroke="#8e99a9"/>
<path d="M52 16.500l3-4 0 4zM106 16.500l3-4 0 4zM160 16.500l3-4 0 4z" fill="#5f6a7a"/></svg>
<span class="t" id="t84" style="left:79.90px;top:564.00px;font-size:12.25px;letter-spacing:0.007px;font-weight:700;">Лист1</span>
<span class="t" id="t85" style="left:132.50px;top:564.00px;font-size:12.75px;letter-spacing:-0.039px;">Лист2</span>
<span class="t" id="t86" style="left:185.50px;top:564.00px;font-size:12.75px;letter-spacing:-0.039px;">Лист3</span>
<svg style="left:239px;top:566px" width="17" height="13" viewBox="0 0 17 13"><rect x="4.500" y="2.500" width="11" height="8.500" fill="#f7f9fc" stroke="#6a7688"/><path d="M6 12.500h11" stroke="#6a7688"/><path d="M3.500 0l1 2.500 2.500 1-2.500 1-1 2.500-1-2.500L0 3.500l2.500-1z" fill="#f0b030" stroke="#b87a10" stroke-width=".400"/></svg>
<div style="left:527px;top:565px;width:344px;height:15px;background:linear-gradient(180deg,#dde4ee,#eef2f7 50%,#e1e7f0);"></div>
<div style="left:527px;top:565px;width:8px;height:15px;background:#fff;border:1px solid #8e99a9;"></div>
<div style="left:530px;top:569px;width:1px;height:7px;background:#5f6a7a;"></div>
<svg style="left:539px;top:568.5px" width="6" height="8" viewBox="0 0 6 8"><path d="M5.500 0v8L0.500 4z" fill="#3f4754"/></svg>
<div style="left:551px;top:565px;width:266px;height:15px;border:1px solid #98a3b3;border-radius:2px;background:linear-gradient(180deg,#fafbfd,#e9edf3 50%,#d9e0ea);"></div>
<div style="left:681px;top:569px;width:1px;height:7px;background:#8b96a6;"></div>
<div style="left:683px;top:569px;width:1px;height:7px;background:#8b96a6;"></div>
<div style="left:685px;top:569px;width:1px;height:7px;background:#8b96a6;"></div>
<div style="left:687px;top:569px;width:1px;height:7px;background:#8b96a6;"></div>
<svg style="left:853px;top:568.5px" width="6" height="8" viewBox="0 0 6 8"><path d="M0.500 0v8l5-4z" fill="#3f4754"/></svg>
<div style="left:863px;top:565px;width:8px;height:15px;background:#fff;border:1px solid #8e99a9;"></div>
<div style="left:866px;top:569px;width:1px;height:7px;background:#5f6a7a;"></div>
<div style="left:871px;top:564px;width:16px;height:17px;background:#dfe5ee;"></div>
<div style="left:8px;top:580px;width:879px;height:22px;background:linear-gradient(180deg,#e6eaf0 0%,#dde2ea 40%,#c9d0da 55%,#cbd2dc 100%);border-top:1px solid #8d97a5;box-shadow:inset 0 1px 0 #f6f8fa;"></div>
<span class="t" id="t87" style="left:15.80px;top:583.00px;font-size:11.75px;letter-spacing:0.051px;">Готово</span>
<div style="left:63px;top:584px;width:1px;height:17px;background:#a3aebd;"></div>
<div style="left:64px;top:584px;width:1px;height:17px;background:#f4f7fb;"></div>
<div style="left:97px;top:584px;width:1px;height:17px;background:#a3aebd;"></div>
<div style="left:98px;top:584px;width:1px;height:17px;background:#f4f7fb;"></div>
<div style="left:630px;top:584px;width:1px;height:17px;background:#a3aebd;"></div>
<div style="left:631px;top:584px;width:1px;height:17px;background:#f4f7fb;"></div>
<svg style="left:72px;top:584px" width="16" height="13" viewBox="0 0 16 13"><rect x="0.500" y="1.500" width="14" height="11" fill="#f4f7fb" stroke="#4a6aa8"/><rect x="1" y="2" width="13" height="2.500" fill="#5f8fd8"/><path d="M3 6.500h3M7 6.500h3M11 6.500h2.500M3 8.500h3M7 8.500h3M11 8.500h2.500M3 10.500h3M7 10.500h3M11 10.500h2.500" stroke="#6f8fc8"/><circle cx="3" cy="3" r="2.800" fill="#d8482a"/></svg>
<span class="t" id="t88" style="left:320.50px;top:583.00px;font-size:11.00px;letter-spacing:0.011px;">Среднее: 158,93</span>
<span class="t" id="t89" style="left:450.50px;top:583.00px;font-size:11.25px;letter-spacing:0.029px;">Количество: 18</span>
<span class="t" id="t90" style="left:546.50px;top:583.00px;font-size:11.00px;letter-spacing:-0.056px;">Сумма: 1589,3</span>
<div style="left:635px;top:582px;width:18px;height:18px;border:1px solid #d9a23a;border-radius:2px;background:linear-gradient(180deg,#fde9a8,#f9cf62);"></div>
<svg style="left:638px;top:585.5px" width="12" height="11" viewBox="0 0 12 11"><rect x="0.500" y="0.500" width="11" height="10" fill="#fff" stroke="#5a6578"/><path d="M0.500 3.800h11M0.500 7.200h11M4.200 0.500v10M7.800 0.500v10" stroke="#5a6578"/></svg>
<svg style="left:657px;top:586px" width="12" height="11" viewBox="0 0 12 11"><rect x="0.500" y="0.500" width="11" height="10" fill="#dfe4ec" stroke="#5a6578"/><rect x="2.500" y="2.500" width="7" height="6" fill="#fff" stroke="#5a6578"/><path d="M4 4.500h4M4 6.500h4" stroke="#8a94a6" stroke-width=".800"/></svg>
<svg style="left:675px;top:586px" width="14" height="11" viewBox="0 0 14 11"><rect x="0.500" y="0.500" width="12.500" height="10" fill="#fff" stroke="#5a6578"/><path d="M6.500 0.500v6M0.500 6.500h12.500" stroke="#5a6578"/><rect x="1" y="7" width="11.500" height="3" fill="#aab4c3"/><rect x="7" y="1" width="5.500" height="5" fill="#dfe4ec"/></svg>
<span class="t" id="t91" style="left:699.50px;top:583.00px;font-size:11.00px;letter-spacing:-0.135px;">100%</span>
<svg style="left:736px;top:584px" width="16" height="16" viewBox="0 0 16 16"><circle cx="7.500" cy="7.500" r="7" fill="#f4f7fb" stroke="#7a8698"/><rect x="3.500" y="6.500" width="8" height="2.200" fill="#3f4754"/></svg>
<div style="left:752px;top:591px;width:100px;height:1px;background:#7f8a9a;"></div>
<div style="left:752px;top:592px;width:100px;height:1px;background:#f4f7fb;"></div>
<svg style="left:797px;top:584px" width="11" height="13" viewBox="0 0 11 13"><path d="M0.500 0.500h9.500v7.500l-4.750 4.500L0.500 8z" fill="#f4f6fa" stroke="#6f7a8c"/></svg>
<svg style="left:852px;top:583px" width="17" height="17" viewBox="0 0 17 17"><circle cx="8" cy="8" r="7.600" fill="#f4f7fb" stroke="#7a8698"/><path d="M4 8h8M8 4v8" stroke="#3f4754" stroke-width="2.200"/></svg>
<div style="left:884px;top:599px;width:2px;height:2px;background:#9aa2af;box-shadow:1px 1px 0 #f0f3f7;"></div>
<div style="left:880px;top:599px;width:2px;height:2px;background:#9aa2af;box-shadow:1px 1px 0 #f0f3f7;"></div>
<div style="left:876px;top:599px;width:2px;height:2px;background:#9aa2af;box-shadow:1px 1px 0 #f0f3f7;"></div>
<div style="left:884px;top:595px;width:2px;height:2px;background:#9aa2af;box-shadow:1px 1px 0 #f0f3f7;"></div>
<div style="left:880px;top:595px;width:2px;height:2px;background:#9aa2af;box-shadow:1px 1px 0 #f0f3f7;"></div>
<div style="left:884px;top:591px;width:2px;height:2px;background:#9aa2af;box-shadow:1px 1px 0 #f0f3f7;"></div>
</div>
</body></html>
